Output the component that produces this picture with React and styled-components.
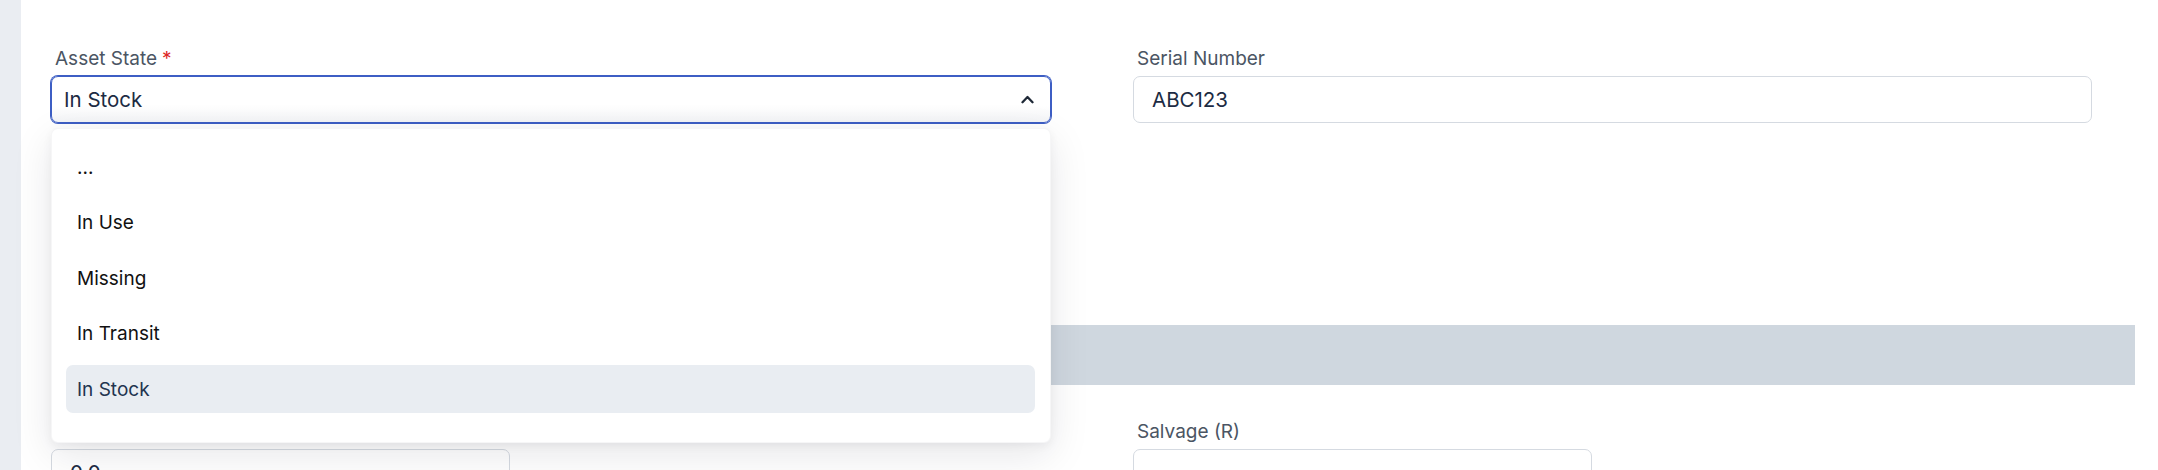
import React from 'react';
import styled, { createGlobalStyle } from 'styled-components';

const GlobalStyle = createGlobalStyle`
    html, body {
        margin: 0;
        padding: 0;
        background: #ffffff;
    }
    body {
        font-family: Inter, "Noto Sans", "Liberation Sans", sans-serif;
        -webkit-font-smoothing: antialiased;
    }
`;

const Page = styled.div`
    display: flex;
    align-items: flex-start;
    width: 2158px;
    height: 470px;
    overflow: hidden;
    background: #ffffff;
`;

const Sidebar = styled.div`
    flex: 0 0 21px;
    align-self: stretch;
    background: #eaedf2;
`;

const Main = styled.main`
    flex: 1;
    padding: 45px 23px 0 30px;
`;

const FieldGrid = styled.div`
    display: grid;
    grid-template-columns: repeat(4, 459px);
    column-gap: 82px;
`;

const Field = styled.div`
    grid-column: span ${props => props.span || 1};
    display: flex;
    flex-direction: column;
    position: relative;
`;

const Label = styled.label`
    font-size: 19px;
    line-height: 26px;
    height: 26px;
    padding: 1px 0 0 4px;
    color: #4b5563;
    margin-bottom: 4px;
`;

const Required = styled.span`
    color: #dc2626;
    margin-left: 5px;
`;

const SelectWrap = styled.div`
    position: relative;
`;

const SelectBox = styled.div`
    display: flex;
    align-items: center;
    justify-content: space-between;
    box-sizing: border-box;
    height: 47px;
    padding: 0 16px 0 12px;
    border: 1px solid #3d5ec4;
    box-shadow: 0 0 0 1px #3d5ec4;
    border-radius: 7px;
    background: linear-gradient(to bottom, #ffffff 65%, #f3f4f7 100%);
    font-size: 20.5px;
    color: #1c2b43;
`;

const Input = styled.div`
    box-sizing: border-box;
    flex-shrink: 0;
    height: 47px;
    width: ${props => props.width || '100%'};
    display: flex;
    align-items: center;
    padding: 0 18px;
    border: 1px solid #d5dae1;
    border-radius: 7px;
    background: #ffffff;
    font-size: 20.5px;
    color: #1c2b43;
`;

const Menu = styled.ul`
    position: absolute;
    top: calc(100% + 5px);
    left: 0;
    right: 0;
    z-index: 10;
    margin: 0;
    padding: 14px 15px 29px 14px;
    list-style: none;
    background: #ffffff;
    border: 1px solid rgba(15, 23, 42, 0.04);
    border-radius: 7px;
    box-shadow: 0 12px 40px rgba(15, 23, 42, 0.10), 0 3px 10px rgba(15, 23, 42, 0.05);
`;

const MenuItem = styled.li`
    display: flex;
    align-items: center;
    height: 48px;
    padding: 0 11px;
    border-radius: 7px;
    font-size: 19px;
    color: ${props => (props.active ? '#22344f' : '#111111')};
    background: ${props => (props.active ? '#e9edf2' : 'transparent')};
    & + & {
        margin-top: 7.5px;
    }
`;

const SectionBand = styled.div`
    height: 60px;
    margin: 202px 0 33px;
    background: #cfd7df;
`;

const Chevron = () => (
    <svg width="13" height="9" viewBox="0 0 13 9" fill="none">
        <polyline
            points="1.5,7.2 6.5,2 11.5,7.2"
            stroke="#1f2937"
            strokeWidth="2.3"
            strokeLinecap="round"
            strokeLinejoin="round"
        />
    </svg>
);

const options = ['...', 'In Use', 'Missing', 'In Transit', 'In Stock'];

const App = () => {
    const selected = 'In Stock';
    return (
        <Page>
            <GlobalStyle />
            <Sidebar />
            <Main>
                <FieldGrid>
                    <Field span={2}>
                        <Label>
                            Asset State<Required>*</Required>
                        </Label>
                        <SelectWrap>
                            <SelectBox>
                                {selected}
                                <Chevron />
                            </SelectBox>
                            <Menu>
                                {options.map(option => (
                                    <MenuItem key={option} active={option === selected}>
                                        {option}
                                    </MenuItem>
                                ))}
                            </Menu>
                        </SelectWrap>
                    </Field>
                    <Field span={2}>
                        <Label>Serial Number</Label>
                        <Input width="959px">ABC123</Input>
                    </Field>
                </FieldGrid>
                <SectionBand />
                <FieldGrid>
                    <Field>
                        <Label>&nbsp;</Label>
                        <Input>0.0</Input>
                    </Field>
                    <Field />
                    <Field>
                        <Label>Salvage (R)</Label>
                        <Input />
                    </Field>
                </FieldGrid>
            </Main>
        </Page>
    );
};

export default App;
